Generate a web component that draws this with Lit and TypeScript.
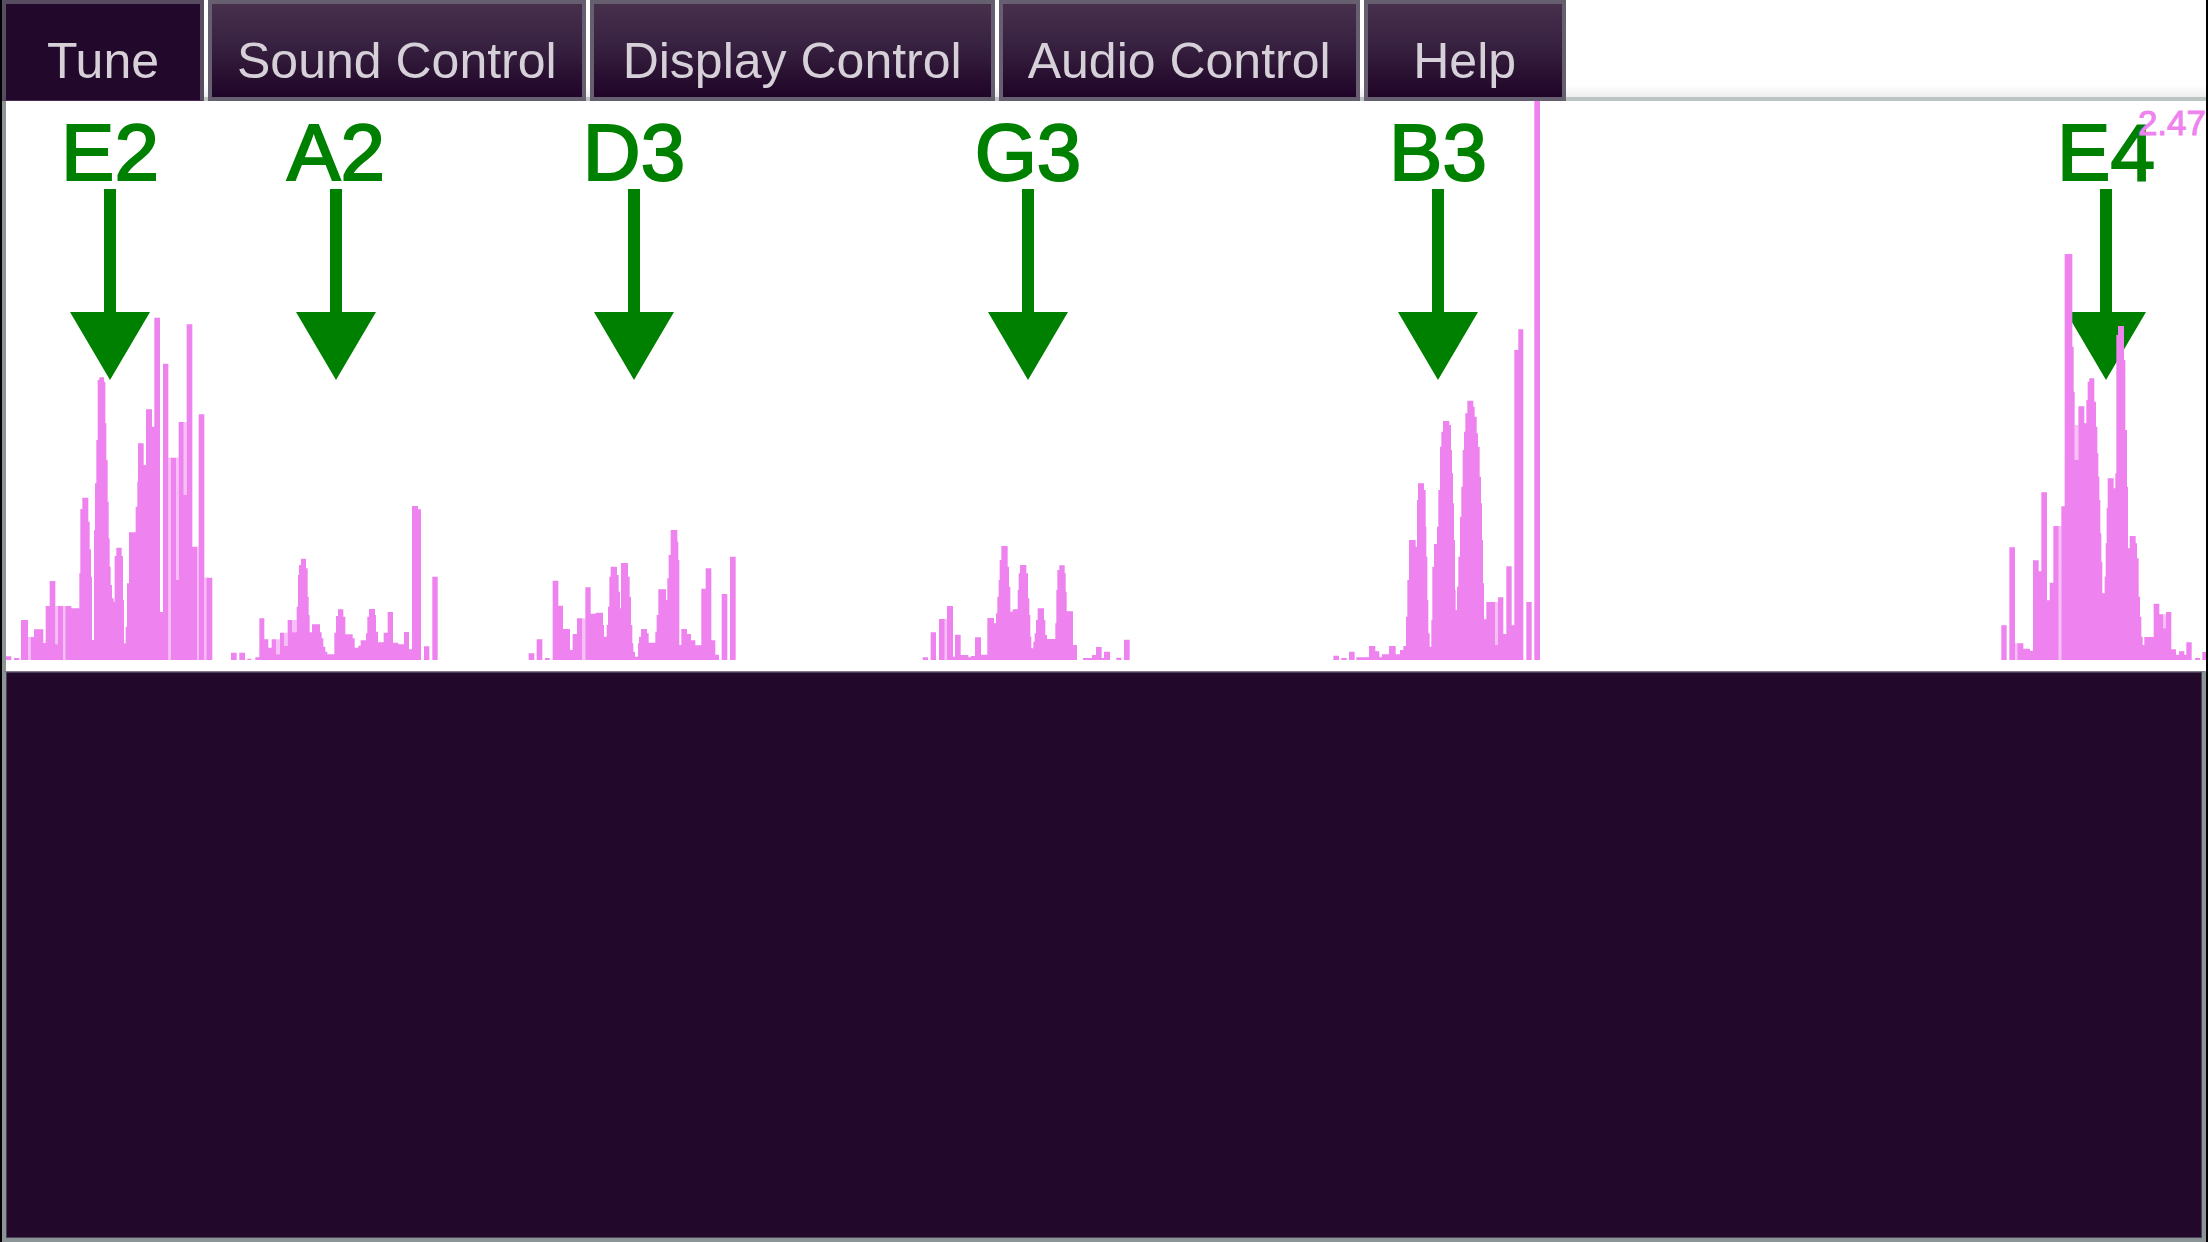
import { LitElement, html, svg, css } from "lit";
import { customElement, property, state } from "lit/decorators.js";
import { classMap } from "lit/directives/class-map.js";

interface Marker {
  note: string;
  x: number;
}

// One band of the spectrum. `steps` holds pairs of x and top, in units of a
// third of a pixel, measured from the band's own origin; each top holds until
// the next x. `soft` holds x, top, width, height of the half-lit bins.
interface Band {
  x: number;
  y: number;
  base: number;
  steps: number[];
  soft: number[][];
}

const MARKERS: Marker[] = [
  { note: "E2", x: 104 },
  { note: "A2", x: 330 },
  { note: "D3", x: 628 },
  { note: "G3", x: 1022 },
  { note: "B3", x: 1432 },
  { note: "E4", x: 2100 },
];

const BANDS: Band[] = [
  {
    x: -6, y: 199, base: 1080,
    steps: [
      18, 1069, 34, 1080, 42, 1074, 58, 1080, 63, 960, 84, 1080, 92, 1011, 102, 988, 130, 1029,
      137, 918, 149, 843, 166, 1033, 174, 918, 189, 1080, 196, 918, 214, 925, 238, 820, 241, 627,
      247, 593, 265, 665, 269, 748, 273, 830, 276, 1020, 282, 690, 285, 550, 289, 420, 293, 240,
      298, 232, 312, 245, 316, 370, 319, 480, 323, 605, 326, 715, 329, 800, 332, 855, 336, 895,
      341, 905, 344, 768, 349, 743, 365, 768, 369, 900, 372, 1030, 377, 980, 381, 850, 387, 697,
      407, 620, 412, 545, 414, 430, 431, 495, 438, 328, 456, 380, 463, 53, 480, 936, 489, 191,
      505, 1080, 513, 473, 528, 840, 536, 366, 551, 585, 560, 73, 577, 740, 591, 1080, 596, 343,
      613, 1080, 619, 833, 637, 1080,
    ],
    soft: [
      [84, 1011, 8, 69], [166, 918, 8, 115], [189, 918, 7, 162], [505, 473, 8, 607],
      [528, 473, 8, 367], [551, 366, 9, 219], [591, 740, 5, 340], [613, 833, 6, 247],
    ],
  },
  {
    x: 214, y: 379, base: 540,
    steps: [
      33, 518, 50, 540, 58, 518, 75, 540, 82, 536, 94, 540, 106, 532, 118, 415, 133, 478, 145, 503,
      155, 478, 168, 523, 180, 458, 192, 498, 203, 420, 216, 457, 230, 380, 234, 285, 237, 255,
      243, 236, 258, 265, 263, 350, 266, 405, 269, 457, 276, 433, 300, 457, 305, 475, 310, 500,
      316, 515, 322, 523, 343, 458, 348, 408, 354, 388, 370, 410, 376, 463, 398, 475, 404, 503,
      415, 497, 422, 481, 438, 460, 442, 410, 447, 387, 465, 405, 468, 455, 474, 487, 491, 458,
      503, 396, 519, 488, 535, 493, 552, 456, 567, 508, 576, 78, 594, 88, 603, 540, 612, 499,
      628, 540, 637, 290, 653, 540,
    ],
    soft: [[168, 478, 12, 45], [192, 458, 11, 40], [216, 420, 14, 37]],
  },
  {
    x: 504, y: 399, base: 480,
    steps: [
      56, 460, 73, 480, 80, 418, 97, 480, 105, 474, 119, 480, 128, 242, 145, 317, 159, 387,
      180, 450, 188, 402, 201, 355, 216, 480, 226, 262, 242, 341, 257, 338, 279, 375, 282, 410,
      290, 375, 294, 320, 298, 230, 302, 200, 321, 225, 326, 275, 330, 325, 333, 189, 354, 230,
      359, 290, 363, 375, 367, 430, 370, 455, 375, 470, 384, 430, 387, 410, 393, 387, 411, 400,
      416, 428, 436, 395, 440, 345, 445, 268, 468, 300, 472, 235, 476, 165, 482, 90, 502, 125,
      505, 180, 508, 435, 514, 387, 531, 402, 543, 421, 556, 436, 574, 266, 587, 205, 604, 421,
      616, 464, 627, 480, 635, 282, 652, 480, 660, 170, 677, 480,
    ],
    soft: [[216, 355, 10, 125]],
  },
  {
    x: 904, y: 419, base: 420,
    steps: [
      38, 412, 54, 420, 62, 337, 78, 420, 87, 297, 104, 420, 111, 258, 129, 410, 135, 344,
      152, 405, 175, 412, 183, 408, 195, 352, 213, 404, 232, 294, 252, 310, 258, 280, 262, 230,
      266, 180, 269, 120, 274, 78, 293, 140, 297, 200, 301, 275, 308, 268, 323, 210, 326, 160,
      330, 135, 349, 160, 354, 235, 358, 285, 361, 350, 364, 385, 370, 365, 374, 340, 378, 300,
      383, 265, 402, 300, 406, 345, 411, 357, 436, 310, 439, 210, 442, 150, 448, 136, 464, 160,
      467, 215, 470, 274, 489, 375, 501, 420, 519, 414, 546, 405, 558, 381, 575, 414, 582, 395,
      600, 420, 619, 413, 634, 420, 642, 359, 659, 420,
    ],
    soft: [[104, 297, 7, 123]],
  },
  {
    x: 1314, y: 199, base: 1080,
    steps: [
      40, 1067, 57, 1080, 64, 1074, 80, 1080, 87, 1055, 104, 1080, 109, 1072, 147, 1038,
      166, 1054, 178, 1072, 186, 1063, 207, 1038, 227, 1063, 240, 1050, 250, 1038, 258, 950,
      262, 840, 267, 720, 287, 740, 291, 600, 294, 550, 312, 570, 317, 680, 319, 770, 322, 900,
      325, 1000, 329, 1040, 334, 960, 337, 800, 342, 732, 351, 680, 355, 570, 360, 440, 364, 395,
      369, 363, 388, 375, 393, 450, 396, 520, 399, 610, 402, 720, 405, 870, 407, 930, 411, 860,
      415, 770, 420, 650, 424, 560, 428, 450, 432, 395, 436, 340, 442, 302, 460, 320, 464, 350,
      470, 400, 474, 440, 479, 530, 483, 610, 486, 720, 489, 850, 492, 958, 499, 906, 525, 1035,
      534, 892, 550, 1002, 559, 799, 575, 976, 583, 150, 595, 88, 610, 1080, 619, 906, 635, 1080,
      643, -597, 660, 1080,
    ],
    soft: [[525, 906, 9, 129]],
  },
  {
    x: 1974, y: 279, base: 840,
    steps: [
      64, 736, 80, 840, 88, 502, 105, 840, 112, 790, 130, 806, 150, 812, 159, 541, 176, 574,
      184, 337, 201, 661, 209, 608, 220, 438, 236, 840, 244, 379, 254, -378, 277, -100, 281, 35,
      284, 240, 295, 79, 313, 130, 319, 60, 323, 5, 328, -5, 343, 65, 348, 140, 352, 220,
      355, 290, 358, 360, 361, 460, 364, 545, 367, 640, 374, 590, 377, 490, 380, 385, 383, 295,
      401, 325, 406, 280, 409, -135, 414, -162, 432, -60, 436, 150, 441, 320, 444, 505, 449, 468,
      467, 490, 471, 535, 476, 650, 480, 710, 484, 770, 488, 795, 493, 771, 521, 671, 538, 703,
      550, 745, 558, 696, 574, 808, 588, 824, 597, 814, 613, 824, 619, 787, 635, 840, 645, 834,
      660, 840, 667, 816, 678, 840,
    ],
    soft: [[105, 790, 7, 50], [236, 438, 8, 402], [284, 135, 11, 105], [550, 703, 8, 42]],
  },
];

function outline(band: Band): string {
  let d = `M${band.steps[0]} ${band.base}`;
  for (let i = 0; i < band.steps.length; i += 2) {
    d += `H${band.steps[i]}V${band.steps[i + 1]}`;
  }
  return d + "Z";
}

@customElement("tuner-display")
export class TunerDisplay extends LitElement {
  @property({ type: Number }) level = 2.47;

  static styles = css`
    :host {
      display: block;
      background: #ffffff;
      border-left: 4px solid #8b9496;
    }
    .plot {
      display: block;
      width: 100%;
      height: auto;
      font-family: "Liberation Sans", Arial, Helvetica, sans-serif;
    }
    .marker {
      fill: #008000;
    }
    .note {
      font-size: 80px;
      text-anchor: middle;
      stroke: #008000;
      stroke-width: 2px;
    }
    .bins {
      fill: #ee82ee;
    }
    .soft {
      fill-opacity: 0.5;
    }
    .level {
      font-size: 35px;
      text-anchor: end;
      fill: #ee82ee;
      stroke: #ee82ee;
      stroke-width: 1px;
    }
  `;

  render() {
    return html`
      <svg class="plot" viewBox="0 0 2200 570" role="img" aria-label="String spectrum">
        ${MARKERS.map(
          (m) => svg`
            <g class="marker">
              <text class="note" x=${m.x} y="79">${m.note}</text>
              <path d="M${m.x - 6} 88h12v123h34l-40 68l-40-68h34z"></path>
            </g>`
        )}
        ${BANDS.map(
          (b) => svg`
            <g class="bins" transform="translate(${b.x} ${b.y}) scale(0.33333)">
              <path d=${outline(b)}></path>
              ${b.soft.map(
                ([x, y, w, h]) =>
                  svg`<rect class="soft" x=${x} y=${y} width=${w} height=${h}></rect>`
              )}
            </g>`
        )}
        <text class="level" x="2200" y="34">${this.level.toFixed(2)}</text>
      </svg>
    `;
  }
}

@customElement("app-root")
export class AppRoot extends LitElement {
  @state() private active = "Tune";

  private tabs = ["Tune", "Sound Control", "Display Control", "Audio Control", "Help"];

  static styles = css`
    :host {
      display: flex;
      flex-direction: column;
      box-sizing: border-box;
      min-height: 100vh;
      border: 0 solid #000000;
      border-width: 0 2px;
      background: #ffffff;
      font-family: "Liberation Sans", Arial, Helvetica, sans-serif;
    }
    .tabs {
      display: flex;
      gap: 4px;
      background: linear-gradient(
        to top,
        #bcc4c4 0,
        #bcc4c4 4px,
        #eeeeee 4px,
        #ffffff 16px
      );
    }
    .tab {
      box-sizing: border-box;
      min-width: 202px;
      height: 101px;
      margin: 0;
      padding: 21px 25px 0;
      border: 4px solid #665f70;
      border-radius: 0;
      background: linear-gradient(#46304c, #392342 40%, #1f0427);
      color: #d6d0d9;
      font: inherit;
      font-size: 50px;
      line-height: 60px;
      white-space: nowrap;
      cursor: pointer;
    }
    .tab.roomy {
      padding-left: 29px;
      padding-right: 29px;
    }
    .tab.active {
      border-color: #584c62;
      border-bottom: 1px solid #4a2c55;
      padding-bottom: 3px;
      background: #22082b;
    }
    .panel {
      flex: 1;
      border: 4px solid #8b9496;
      border-top: 1px solid #85788b;
      background: #22082b;
      box-shadow: inset 0 0 0 1px #4c3f58;
    }
  `;

  render() {
    return html`
      <nav class="tabs" role="tablist">
        ${this.tabs.map(
          (name) => html`<button
            type="button"
            role="tab"
            aria-selected=${name === this.active ? "true" : "false"}
            class=${classMap({
              tab: true,
              active: name === this.active,
              roomy: name.startsWith("Display"),
            })}
            @click=${() => (this.active = name)}
          >${name}</button>`
        )}
      </nav>
      <tuner-display></tuner-display>
      <main class="panel"></main>
    `;
  }
}
